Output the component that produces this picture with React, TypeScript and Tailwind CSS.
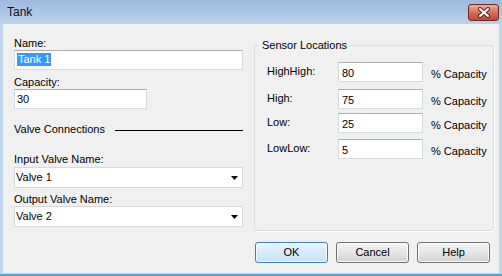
import React from 'react'

function TextBox({ children, className = '' }: { children?: React.ReactNode; className?: string }) {
  return (
    <div
      className={`h-[20px] bg-white border border-[#d6dbe2] border-t-[#abadb3] pl-[2px] text-[11px] leading-[13px] text-black ${className}`}
    >
      {children}
    </div>
  )
}

function Combo({ value }: { value: string }) {
  return (
    <div className="h-[21px] w-[229px] bg-white border border-[#d9d9d9] flex items-center justify-between pl-[1px] pr-[4px]">
      <span className="text-[11px] leading-[13px] text-black">{value}</span>
      <svg width="7" height="4" viewBox="0 0 7 4">
        <path d="M0 0 H7 L3.5 4 Z" fill="#000" />
      </svg>
    </div>
  )
}

function SensorRow({ label, value, mt }: { label: string; value: string; mt: string }) {
  return (
    <div className={`flex items-start ${mt}`}>
      <span className="w-[71px] mt-[3px] text-[11px] leading-[13px]">{label}</span>
      <TextBox className="w-[85px] pt-[4px] pl-[3px]">{value}</TextBox>
      <span className="ml-[8px] mt-[6px] text-[11px] leading-[13px]">% Capacity</span>
    </div>
  )
}

function Button({ label, primary }: { label: string; primary?: boolean }) {
  return (
    <button
      className={
        primary
          ? 'w-[73px] h-[21px] rounded-[3px] border border-[#3c7fb1] bg-linear-to-b from-[#e8f4fc] to-[#c4e2f8] shadow-[inset_0_0_0_1px_#f4fbff] text-[11px] leading-[13px] text-black'
          : 'w-[73px] h-[21px] rounded-[3px] border border-[#707070] bg-linear-to-b from-[#f4f4f4] via-[#e6e6e6] to-[#d2d2d2] shadow-[inset_0_0_0_1px_#fafafa] text-[11px] leading-[13px] text-black'
      }
    >
      {label}
    </button>
  )
}

export default function App() {
  return (
    <div className="w-[502px] h-[276px] flex flex-col bg-[#bed5ee] font-['Liberation_Sans',Arial,sans-serif] text-black select-none">
      {/* title bar */}
      <div className="h-[24px] flex items-center justify-between pl-[7px] pr-[3px] bg-linear-to-b from-[#9fbadd] to-[#bad2ec]">
        <span className="text-[12px] leading-[14px] text-[#111]">Tank</span>
        <div className="w-[31px] h-[17px] rounded-[3px] border border-[#6d2a22] bg-linear-to-b from-[#eab0a3] via-[#d3705d] to-[#c24833] flex items-center justify-center">
          <svg width="14" height="11" viewBox="0 0 14 11">
            <path d="M3 2 L11 9 M11 2 L3 9" stroke="#4a2a28" strokeWidth="4" strokeLinecap="round" />
            <path d="M3 2 L11 9 M11 2 L3 9" stroke="#ffffff" strokeWidth="2" strokeLinecap="round" />
          </svg>
        </div>
      </div>

      {/* client area */}
      <div className="flex-1 ml-[3px] mr-[3px] mb-[1px] bg-[#f0f0f0] flex items-start text-[11px] leading-[13px]">
        <div className="ml-[11px] mt-[13px] w-[229px] flex flex-col">
          <span>Name:</span>
          <TextBox className="w-[229px] pt-[2px] border-[#a9c9e8] border-t-[#7fa9d6]">
            <span className="bg-[#3399ff] text-white px-[1px] inline-block">Tank 1</span>
          </TextBox>
          <span className="mt-[6px]">Capacity:</span>
          <TextBox className="w-[133px] pt-[3px]">30</TextBox>
          <div className="mt-[14px] flex items-center">
            <span>Valve Connections</span>
            <div className="flex-1 ml-[10px] mt-[1px] h-px bg-black" />
          </div>
          <span className="mt-[17px]">Input Valve Name:</span>
          <div className="mt-[1px]">
            <Combo value="Valve 1" />
          </div>
          <span className="mt-[5px]">Output Valve Name:</span>
          <Combo value="Valve 2" />
        </div>

        <div className="ml-[11px] mt-[15px] flex flex-col">
          <fieldset className="w-[240px] border border-[#d5dfe5] rounded-[3px] pl-[12px] pb-[71px] shadow-[1px_1px_0_#ffffff]">
            <legend className="ml-[-8px] px-[3px]">Sensor Locations</legend>
            <SensorRow label="HighHigh:" value="80" mt="mt-[10px]" />
            <SensorRow label="High:" value="75" mt="mt-[7px]" />
            <SensorRow label="Low:" value="25" mt="mt-[4px]" />
            <SensorRow label="LowLow:" value="5" mt="mt-[6px]" />
          </fieldset>
          <div className="mt-[11px] ml-[1px] flex gap-[8px]">
            <Button label="OK" primary />
            <Button label="Cancel" />
            <Button label="Help" />
          </div>
        </div>
      </div>
      <div className="h-[2px] bg-[#42aee0]" />
    </div>
  )
}
